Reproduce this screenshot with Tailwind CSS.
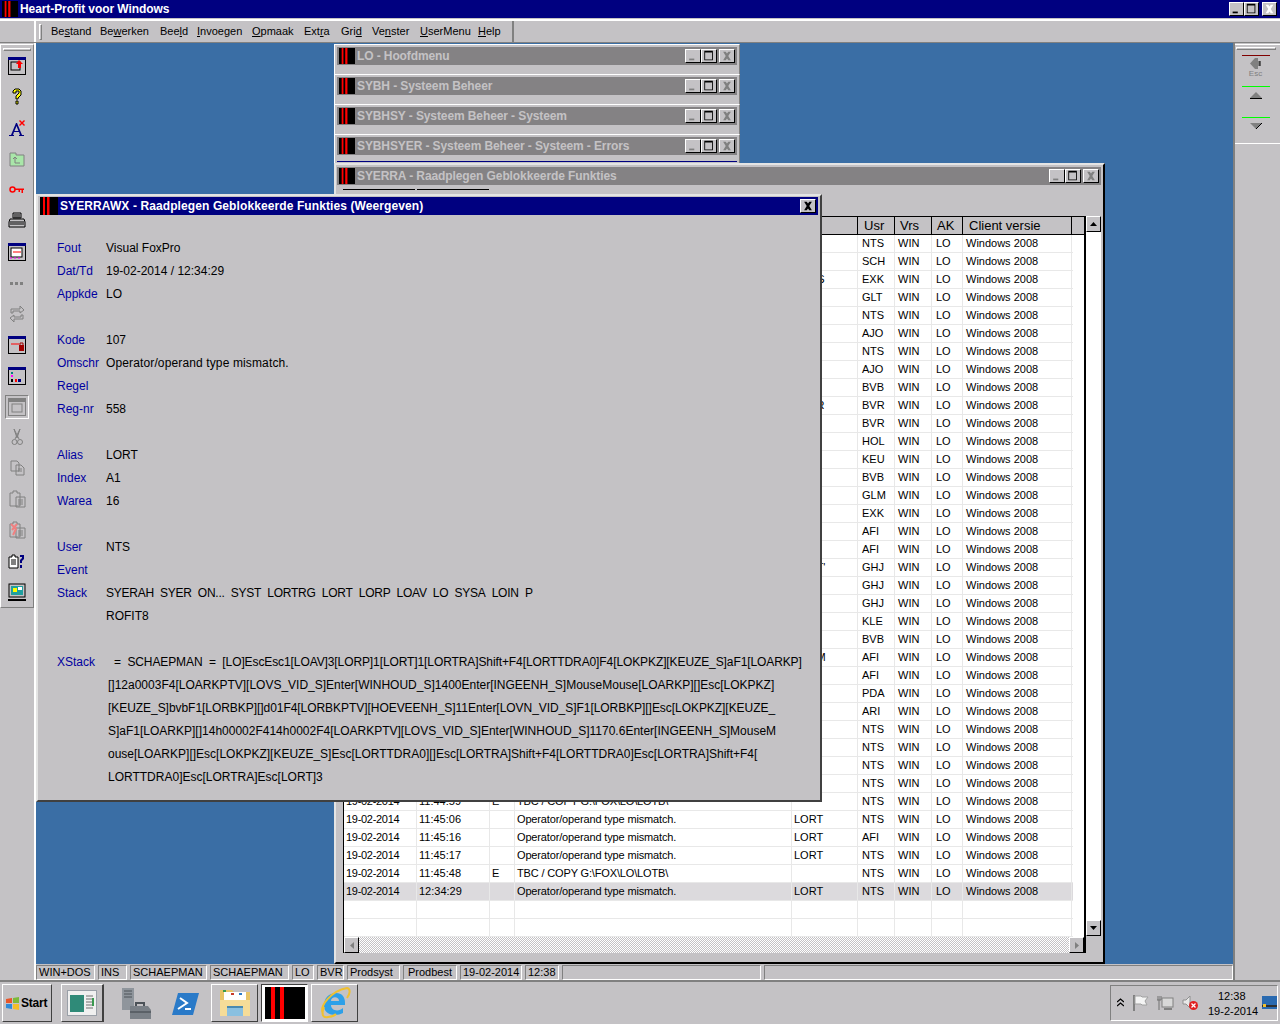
<!DOCTYPE html>
<html lang="nl">
<head>
    <meta charset="UTF-8">
    <title>Heart-Profit voor Windows</title>
    <script src="https://cdn.jsdelivr.net/npm/@tailwindcss/browser@4"></script>
</head>
<body class="w-[1280px] h-[1024px] overflow-hidden flex flex-col bg-[#c4c2c5] text-black text-[12px] leading-none font-['Liberation_Sans',sans-serif]">
    <!-- shared symbols -->
    <svg class="hidden">
        <symbol id="logo" viewBox="0 0 18 18"><rect width="18" height="18" fill="#000"/><rect x="3" width="2" height="18" fill="#f00"/><rect x="7" width="2.5" height="18" fill="#f00"/></symbol>
        <symbol id="min" viewBox="0 0 15 14"><rect x="3" y="10" width="6" height="2" fill="currentColor"/></symbol>
        <symbol id="max" viewBox="0 0 15 14"><path d="M2 1h10v11H2z M3 3v8h8V3z" fill="currentColor" fill-rule="evenodd"/></symbol>
        <symbol id="close" viewBox="0 0 15 14"><path d="M3 2l3 0 1.500 2 1.500-2 3 0-3 5 3 5-3 0-1.500-2-1.500 2-3 0 3-5z" fill="currentColor"/></symbol>
    </svg>

    <!-- hoofd titelbalk -->
    <header class="h-[18px] shrink-0 bg-[#000080] flex items-center text-white font-bold text-[12px] tracking-[-0.08px]">
        <svg class="w-[16px] h-[18px] ml-[2px] mr-[2px]"><use href="#logo"/></svg>
        <span>Heart-Profit voor Windows</span>
        <div class="ml-auto mr-[3px] flex">
            <button class="w-[15px] h-[14px] bg-[#c4c2c5] border-t border-l border-white border-r border-b border-r-black border-b-black text-black"><svg class="w-full h-full"><use href="#min"/></svg></button>
            <button class="w-[15px] h-[14px] bg-[#c4c2c5] border-t border-l border-white border-r border-b border-r-black border-b-black text-black"><svg class="w-full h-full"><use href="#max"/></svg></button>
            <button class="ml-[3px] w-[15px] h-[14px] bg-[#c4c2c5] border-t border-l border-white border-r border-b border-r-black border-b-black text-white"><svg class="w-full h-full"><use href="#close"/></svg></button>
        </div>
    </header>

    <!-- menubalk -->
    <nav class="h-[24px] shrink-0 flex border-t-2 border-t-white border-b border-b-[#808080] mt-[1px] text-[11px]">
        <div class="w-[36px] border-r-2 border-r-white"></div>
        <div class="w-[478px] flex items-center border-r-2 border-r-[#808080] relative">
            <div class="w-[3px] h-[16px] ml-[3px] border-l border-t border-white border-r border-b border-r-[#808080] border-b-[#808080]"></div>
            <a class="absolute left-[15px]">Be<u>s</u>tand</a>
            <a class="absolute left-[64px]">Be<u>w</u>erken</a>
            <a class="absolute left-[124px]">Bee<u>l</u>d</a>
            <a class="absolute left-[161px]"><u>I</u>nvoegen</a>
            <a class="absolute left-[216px]"><u>O</u>pmaak</a>
            <a class="absolute left-[268px]">Ext<u>r</u>a</a>
            <a class="absolute left-[305px]">Gri<u>d</u></a>
            <a class="absolute left-[336px]">Ve<u>n</u>ster</a>
            <a class="absolute left-[384px]"><u>U</u>serMenu</a>
            <a class="absolute left-[442px]"><u>H</u>elp</a>
        </div>
    </nav>

    <main class="flex-1 flex min-h-0">
        <!-- linker knoppenbalk -->
        <aside class="w-[36px] shrink-0 border-r-2 border-r-white">
            <div class="h-[564px] border-t border-l border-white border-r border-b border-r-[#808080] border-b-[#808080] mt-[1px] flex flex-col items-center relative">
                <div class="w-[28px] h-[3px] mt-[3px] border-t border-l border-white border-r border-b border-r-[#808080] border-b-[#808080]"></div>
                <div class="absolute left-[7px] top-[12px] flex flex-col gap-[13px]">
                    <svg class="w-[18px] h-[18px]" viewBox="0 0 18 18"><rect x=".5" y=".5" width="17" height="17" fill="#c4c2c5" stroke="#000"/><rect width="18" height="3" fill="#000080"/><rect x="3" y="5" width="9" height="8" fill="none" stroke="#000"/><path d="M11 3l4 4h-2v4h-3V7H8z" fill="#f00"/></svg>
                    <svg class="w-[18px] h-[18px]" viewBox="0 0 18 18"><path d="M5 5V3l2-2h4l2 2v4l-3 3v1H8V8l3-3V3H8v2zM8 13h2v3H8z" fill="#ff0" stroke="#000"/></svg>
                    <svg class="w-[18px] h-[18px]" viewBox="0 0 18 18"><path d="M1 17h5v-1H5l1-3h5l1 3h-1v1h5v-1h-2L9 4H8L3 16H1zM6.500 12L8.500 7l2 5z" fill="#000080"/><path d="M12 1l2 2 2-2 1 1-2 2 2 2-1 1-2-2-2 2-1-1 2-2-2-2z" fill="#f00"/></svg>
                    <svg class="w-[18px] h-[18px]" viewBox="0 0 18 18"><path d="M2 5V3h6v2h8v11H2z" fill="#a9e6a9" stroke="#808080"/><path d="M7 7v6h5M5 9l2-2 2 2" fill="none" stroke="#808080"/></svg>
                    <svg class="w-[18px] h-[18px]" viewBox="0 0 18 18"><circle cx="4.500" cy="8.500" r="2.500" fill="none" stroke="#f00" stroke-width="1.500"/><path d="M7 7.500h9V9h-1v3h-1.500V9H12v2h-1.500V9H7z" fill="#f00"/></svg>
                    <svg class="w-[18px] h-[18px]" viewBox="0 0 18 18"><path d="M5 1h8v5H5zM2 7h14l1 3v5H1v-5z" fill="#c4c2c5" stroke="#000"/><path d="M2 10h14M2 12h14M6 3h6M6 5h6" stroke="#000"/></svg>
                    <svg class="w-[18px] h-[18px]" viewBox="0 0 18 18"><rect x=".5" y=".5" width="17" height="17" fill="#c4c2c5" stroke="#000"/><rect width="18" height="3" fill="#000080"/><rect x="3" y="5" width="11" height="9" fill="#fff" stroke="#000"/><path d="M5 9h8" stroke="#f00"/><path d="M2 15h2M6 15h2M10 15h2" stroke="#f0f"/></svg>
                    <svg class="w-[18px] h-[18px]" viewBox="0 0 18 18"><path d="M2 8h3v3H2zM7 8h3v3H7zM12 8h3v3h-3z" fill="#808080"/></svg>
                    <svg class="w-[18px] h-[18px]" viewBox="0 0 18 18"><path d="M3 8V4h9V1l4 4-4 3V6H5v2zM15 10v4H6v3l-4-4 4-3v2h7v-2z" fill="none" stroke="#808080"/></svg>
                    <svg class="w-[18px] h-[18px]" viewBox="0 0 18 18"><rect x=".5" y=".5" width="17" height="17" fill="#c4c2c5" stroke="#000"/><rect width="18" height="3" fill="#000080"/><path d="M3 8h8" stroke="#f00"/><rect x="11" y="9" width="5" height="6" fill="#a00000"/><path d="M12 9V7h3v2" fill="none" stroke="#a00000"/></svg>
                    <svg class="w-[18px] h-[18px]" viewBox="0 0 18 18"><rect x=".5" y=".5" width="17" height="17" fill="#c4c2c5" stroke="#000"/><rect width="18" height="3" fill="#000080"/><rect x="3" y="5" width="2" height="2" fill="#008080"/><rect x="3" y="8" width="2" height="2" fill="#f0f"/><rect x="3" y="12" width="2" height="3" fill="#000"/><rect x="7" y="12" width="2" height="3" fill="#f00"/><rect x="10" y="12" width="3" height="3" fill="#000080"/></svg>
                </div>
                <!-- ingedrukte knop -->
                <div class="absolute left-[4px] top-[350px] w-[24px] h-[24px] border-t border-l border-t-[#808080] border-l-[#808080] border-r border-b border-white flex items-center justify-center">
                    <svg class="w-[18px] h-[18px]" viewBox="0 0 18 18"><rect x=".5" y=".5" width="17" height="17" fill="none" stroke="#808080"/><rect x="1" y="1" width="16" height="3" fill="#808080"/><rect x="4" y="6" width="10" height="8" fill="none" stroke="#808080"/></svg>
                </div>
                <div class="absolute left-[7px] top-[383px] flex flex-col gap-[13px]">
                    <svg class="w-[18px] h-[18px]" viewBox="0 0 18 18"><path d="M6 1l3 9 3-9M12 1L7 11M6 1l5 10" fill="none" stroke="#808080"/><circle cx="6.500" cy="14" r="2.500" fill="none" stroke="#808080"/><circle cx="12" cy="14" r="2.500" fill="none" stroke="#808080"/></svg>
                    <svg class="w-[18px] h-[18px]" viewBox="0 0 18 18"><path d="M3 2h6l2 2v8H3z M8 6h5l3 3v7H8z" fill="#c4c2c5" stroke="#808080"/><path d="M10 10h4M10 12h4" stroke="#808080"/></svg>
                    <svg class="w-[18px] h-[18px]" viewBox="0 0 18 18"><path d="M2 3h3V1h4v2h3v13H2z M8 7h9v10H8z" fill="#c4c2c5" stroke="#808080"/><path d="M10 10h5M10 12h5M10 14h5" stroke="#808080"/></svg>
                    <svg class="w-[18px] h-[18px]" viewBox="0 0 18 18"><path d="M2 3h3V1h4v2h3v13H2z M8 7h9v10H8z" fill="#c4c2c5" stroke="#808080"/><path d="M10 10h5M10 12h5M10 14h5" stroke="#808080"/><path d="M3 3l5 5-3 6M9 3L4 9" fill="none" stroke="#f08080" stroke-width="2"/></svg>
                    <svg class="w-[18px] h-[18px]" viewBox="0 0 18 18"><path d="M1 5h3V3h3v2h3v11H1z" fill="#fff" stroke="#000"/><path d="M3 8h5M3 10h5M3 12h5" stroke="#000"/><path d="M12 3h4v4l-2 2v2h-2V8l2-2V5h-2zM12 13h2v3h-2z" fill="#000080"/></svg>
                    <svg class="w-[18px] h-[18px]" viewBox="0 0 18 18"><rect x="1" y="1" width="16" height="13" fill="#c4c2c5" stroke="#000"/><rect x="3" y="3" width="12" height="9" fill="#20a0a0"/><rect x="5" y="5" width="4" height="4" fill="#ff0"/><rect x="10" y="4" width="4" height="3" fill="#fff"/><rect x="0" y="16" width="18" height="2" fill="#000"/></svg>
                </div>
            </div>
        </aside>

        <!-- midden: bureaublad en statusbalk -->
        <div class="flex-1 flex flex-col min-w-0">
            <section id="desktop" class="flex-1 bg-[#3a6ea5] relative">
                <div class="absolute left-[298px] top-[1px] w-[406px] h-[30px] bg-[#c4c2c5] border-t border-l border-white border-r border-r-[#808080] pt-[2px] pl-[2px] pr-[2px]">
                    <div class="h-[18px] bg-[#848284] flex items-center text-[#c4c2c5] font-bold tracking-[-0.1px]">
                        <svg class="w-[16px] h-[18px] ml-[2px] mr-[2px]"><use href="#logo"/></svg><span>LO - Hoofdmenu</span>
                        <div class="ml-auto mr-[2px] flex">
                            <button class="w-[16px] h-[14px] bg-[#c4c2c5] border-t border-l border-white border-r border-b border-r-black border-b-black text-[#808080]"><svg class="w-full h-full"><use href="#min"/></svg></button>
                            <button class="w-[16px] h-[14px] bg-[#c4c2c5] border-t border-l border-white border-r border-b border-r-black border-b-black text-black"><svg class="w-full h-full"><use href="#max"/></svg></button>
                            <button class="ml-[2px] w-[16px] h-[14px] bg-[#c4c2c5] border-t border-l border-white border-r border-b border-r-black border-b-black text-[#808080]"><svg class="w-full h-full"><use href="#close"/></svg></button>
                        </div>
                    </div>
                </div>
                <div class="absolute left-[298px] top-[31px] w-[406px] h-[30px] bg-[#c4c2c5] border-t border-l border-white border-r border-r-[#808080] pt-[2px] pl-[2px] pr-[2px]">
                    <div class="h-[18px] bg-[#848284] flex items-center text-[#c4c2c5] font-bold tracking-[-0.1px]">
                        <svg class="w-[16px] h-[18px] ml-[2px] mr-[2px]"><use href="#logo"/></svg><span>SYBH - Systeem Beheer</span>
                        <div class="ml-auto mr-[2px] flex">
                            <button class="w-[16px] h-[14px] bg-[#c4c2c5] border-t border-l border-white border-r border-b border-r-black border-b-black text-[#808080]"><svg class="w-full h-full"><use href="#min"/></svg></button>
                            <button class="w-[16px] h-[14px] bg-[#c4c2c5] border-t border-l border-white border-r border-b border-r-black border-b-black text-black"><svg class="w-full h-full"><use href="#max"/></svg></button>
                            <button class="ml-[2px] w-[16px] h-[14px] bg-[#c4c2c5] border-t border-l border-white border-r border-b border-r-black border-b-black text-[#808080]"><svg class="w-full h-full"><use href="#close"/></svg></button>
                        </div>
                    </div>
                </div>
                <div class="absolute left-[298px] top-[61px] w-[406px] h-[30px] bg-[#c4c2c5] border-t border-l border-white border-r border-r-[#808080] pt-[2px] pl-[2px] pr-[2px]">
                    <div class="h-[18px] bg-[#848284] flex items-center text-[#c4c2c5] font-bold tracking-[-0.1px]">
                        <svg class="w-[16px] h-[18px] ml-[2px] mr-[2px]"><use href="#logo"/></svg><span>SYBHSY - Systeem Beheer - Systeem</span>
                        <div class="ml-auto mr-[2px] flex">
                            <button class="w-[16px] h-[14px] bg-[#c4c2c5] border-t border-l border-white border-r border-b border-r-black border-b-black text-[#808080]"><svg class="w-full h-full"><use href="#min"/></svg></button>
                            <button class="w-[16px] h-[14px] bg-[#c4c2c5] border-t border-l border-white border-r border-b border-r-black border-b-black text-black"><svg class="w-full h-full"><use href="#max"/></svg></button>
                            <button class="ml-[2px] w-[16px] h-[14px] bg-[#c4c2c5] border-t border-l border-white border-r border-b border-r-black border-b-black text-[#808080]"><svg class="w-full h-full"><use href="#close"/></svg></button>
                        </div>
                    </div>
                </div>
                <div class="absolute left-[298px] top-[91px] w-[406px] h-[30px] bg-[#c4c2c5] border-t border-l border-white border-r border-r-[#808080] pt-[2px] pl-[2px] pr-[2px]">
                    <div class="h-[18px] bg-[#848284] flex items-center text-[#c4c2c5] font-bold tracking-[-0.1px]">
                        <svg class="w-[16px] h-[18px] ml-[2px] mr-[2px]"><use href="#logo"/></svg><span>SYBHSYER - Systeem Beheer - Systeem - Errors</span>
                        <div class="ml-auto mr-[2px] flex">
                            <button class="w-[16px] h-[14px] bg-[#c4c2c5] border-t border-l border-white border-r border-b border-r-black border-b-black text-[#808080]"><svg class="w-full h-full"><use href="#min"/></svg></button>
                            <button class="w-[16px] h-[14px] bg-[#c4c2c5] border-t border-l border-white border-r border-b border-r-black border-b-black text-black"><svg class="w-full h-full"><use href="#max"/></svg></button>
                            <button class="ml-[2px] w-[16px] h-[14px] bg-[#c4c2c5] border-t border-l border-white border-r border-b border-r-black border-b-black text-[#808080]"><svg class="w-full h-full"><use href="#close"/></svg></button>
                        </div>
                    </div>
                    <div class="h-[1px] mt-[6px] bg-[#000080]"></div>
                </div>

                <!-- SYERRA venster met grid -->
                <div class="absolute left-[298px] top-[120px] w-[771px] h-[801px] bg-[#c4c2c5] border-t-2 border-l-2 border-t-[#e4e4e4] border-l-[#e4e4e4] border-r-2 border-b-2 border-r-black border-b-black pt-[2px] pl-[1px] pr-[2px] flex flex-col">
                    <div class="h-[18px] shrink-0 bg-[#848284] flex items-center text-[#c4c2c5] font-bold tracking-[-0.1px]">
                        <svg class="w-[16px] h-[18px] ml-[2px] mr-[2px]"><use href="#logo"/></svg><span>SYERRA - Raadplegen Geblokkeerde Funkties</span>
                        <div class="ml-auto mr-[2px] flex">
                            <button class="w-[16px] h-[14px] bg-[#c4c2c5] border-t border-l border-white border-r border-b border-r-black border-b-black text-[#808080]"><svg class="w-full h-full"><use href="#min"/></svg></button>
                            <button class="w-[16px] h-[14px] bg-[#c4c2c5] border-t border-l border-white border-r border-b border-r-black border-b-black text-black"><svg class="w-full h-full"><use href="#max"/></svg></button>
                            <button class="ml-[2px] w-[16px] h-[14px] bg-[#c4c2c5] border-t border-l border-white border-r border-b border-r-black border-b-black text-[#808080]"><svg class="w-full h-full"><use href="#close"/></svg></button>
                        </div>
                    </div>
                    <div class="flex ml-[6px] gap-[2px] mt-[4px] h-[27px] shrink-0">
                        <div class="w-[72px] border-t border-t-black"></div>
                        <div class="w-[72px] border-t border-t-black"></div>
                    </div>
                    <div class="flex ml-[6px] h-[737px]">
                        <div class="w-[743px] flex flex-col border-t border-l border-r-2 border-black border-r-black">
                            <div class="h-[18px] flex shrink-0 bg-[#c4c2c5] border-b border-b-black text-[13px] items-stretch">
                                <div class="w-[514px] border-r border-r-black"></div>
                                <div class="w-[37px] border-r border-r-black pl-[6px] flex items-center">Usr</div>
                                <div class="w-[37px] border-r border-r-black pl-[5px] flex items-center">Vrs</div>
                                <div class="w-[31px] border-r border-r-black pl-[5px] flex items-center">AK</div>
                                <div class="w-[109px] border-r border-r-black pl-[6px] flex items-center">Client versie</div>
                            </div>
                            <div id="rows" class="flex-1 bg-white overflow-hidden text-[11px]"></div>
                            <!-- horizontale scrollbalk -->
                            <div class="h-[16px] shrink-0 flex justify-between bg-[repeating-conic-gradient(#ffffff_0_25%,#c4c2c5_0_50%)] bg-[length:2px_2px]">
                                <div class="w-[15px] h-[16px] bg-[#c4c2c5] border-t border-l border-white border-r border-b border-r-black border-b-black flex items-center justify-center"><svg class="w-[4px] h-[7px]" viewBox="0 0 4 7"><path d="M4 0v7L0 3.500z" fill="#808080"/></svg></div>
                                <div class="w-[15px] h-[16px] bg-[#c4c2c5] border-t border-l border-white border-r border-b border-r-black border-b-black flex items-center justify-center"><svg class="w-[4px] h-[7px]" viewBox="0 0 4 7"><path d="M0 0v7l4-3.500z" fill="#808080"/></svg></div>
                            </div>
                        </div>
                        <!-- verticale scrollbalk -->
                        <div class="w-[15px] h-[720px] flex flex-col justify-between bg-white">
                            <div class="h-[16px] bg-[#c4c2c5] border-t border-l border-white border-r border-b border-r-black border-b-black flex items-center justify-center"><svg class="w-[7px] h-[4px]" viewBox="0 0 7 4"><path d="M0 4h7L3.500 0z"/></svg></div>
                            <div class="h-[16px] bg-[#c4c2c5] border-t border-l border-white border-r border-b border-r-black border-b-black flex items-center justify-center"><svg class="w-[7px] h-[4px]" viewBox="0 0 7 4"><path d="M0 0h7L3.500 4z"/></svg></div>
                        </div>
                    </div>
                </div>

                <!-- actief dialoogvenster -->
                <div class="absolute left-0 top-[151px] w-[786px] h-[608px] bg-[#c4c2c5] border-t-2 border-l-2 border-t-[#e4e4e4] border-l-[#e4e4e4] border-r-2 border-b-2 border-r-[#404040] border-b-[#404040] pt-[1px] pl-[2px] pr-[2px]">
                    <div class="h-[18px] bg-[#000080] flex items-center text-white font-bold tracking-[0.1px]">
                        <svg class="w-[18px] h-[18px] mr-[2px]"><use href="#logo"/></svg><span>SYERRAWX - Raadplegen Geblokkeerde Funkties (Weergeven)</span>
                        <button class="ml-auto mr-[2px] w-[16px] h-[14px] bg-[#c4c2c5] border-t border-l border-white border-r border-b border-r-black border-b-black text-black"><svg class="w-full h-full"><use href="#close"/></svg></button>
                    </div>
                    <div class="pl-[17px] pt-[21px] grid grid-cols-[49px_1fr] auto-rows-[23px] items-center whitespace-nowrap">
                        <span class="text-[#0000a0]">Fout</span><span>Visual FoxPro</span>
                        <span class="text-[#0000a0]">Dat/Td</span><span>19-02-2014 / 12:34:29</span>
                        <span class="text-[#0000a0]">Appkde</span><span>LO</span>
                        <span class="col-span-2"></span>
                        <span class="text-[#0000a0]">Kode</span><span>107</span>
                        <span class="text-[#0000a0] w-[44px] overflow-hidden">Omschr</span><span class="tracking-[0.13px]">Operator/operand type mismatch.</span>
                        <span class="text-[#0000a0]">Regel</span><span></span>
                        <span class="text-[#0000a0]">Reg-nr</span><span>558</span>
                        <span class="col-span-2"></span>
                        <span class="text-[#0000a0]">Alias</span><span>LORT</span>
                        <span class="text-[#0000a0]">Index</span><span>A1</span>
                        <span class="text-[#0000a0]">Warea</span><span>16</span>
                        <span class="col-span-2"></span>
                        <span class="text-[#0000a0]">User</span><span>NTS</span>
                        <span class="text-[#0000a0]">Event</span><span></span>
                        <span class="text-[#0000a0]">Stack</span><span class="tracking-[-0.25px]">SYERAH&nbsp; SYER&nbsp; ON...&nbsp; SYST&nbsp; LORTRG&nbsp; LORT&nbsp; LORP&nbsp; LOAV&nbsp; LO&nbsp; SYSA&nbsp; LOIN&nbsp; P</span>
                        <span></span><span>ROFIT8</span>
                        <span class="col-span-2"></span>
                        <span class="text-[#0000a0]">XStack</span><span class="pl-[8px] tracking-[-0.1px]">=&nbsp; SCHAEPMAN&nbsp; =&nbsp; [LO]EscEsc1[LOAV]3[LORP]1[LORT]1[LORTRA]Shift+F4[LORTTDRA0]F4[LOKPKZ][KEUZE_S]aF1[LOARKP]</span>
                        <span></span><span class="pl-[2px]">[]12a0003F4[LOARKPTV][LOVS_VID_S]Enter[WINHOUD_S]1400Enter[INGEENH_S]MouseMouse[LOARKP][]Esc[LOKPKZ]</span>
                        <span></span><span class="pl-[2px] tracking-[-0.05px]">[KEUZE_S]bvbF1[LORBKP][]d01F4[LORBKPTV][HOEVEENH_S]11Enter[LOVN_VID_S]F1[LORBKP][]Esc[LOKPKZ][KEUZE_</span>
                        <span></span><span class="pl-[2px]">S]aF1[LOARKP][]14h00002F414h0002F4[LOARKPTV][LOVS_VID_S]Enter[WINHOUD_S]1170.6Enter[INGEENH_S]MouseM</span>
                        <span></span><span class="pl-[2px]">ouse[LOARKP][]Esc[LOKPKZ][KEUZE_S]Esc[LORTTDRA0][]Esc[LORTRA]Shift+F4[LORTTDRA0]Esc[LORTRA]Shift+F4[</span>
                        <span></span><span class="pl-[2px]">LORTTDRA0]Esc[LORTRA]Esc[LORT]3</span>
                    </div>
                </div>
            </section>

            <!-- statusbalk -->
            <footer class="h-[16px] shrink-0 flex gap-[3px] pt-[1px] text-[11px] whitespace-nowrap">
                <div class="w-[59px] border-t border-l border-t-[#808080] border-l-[#808080] border-r border-b border-white flex items-center pl-[2px]">WIN+DOS</div>
                <div class="w-[29px] border-t border-l border-t-[#808080] border-l-[#808080] border-r border-b border-white flex items-center pl-[2px]">INS</div>
                <div class="w-[77px] border-t border-l border-t-[#808080] border-l-[#808080] border-r border-b border-white flex items-center pl-[2px]">SCHAEPMAN</div>
                <div class="w-[79px] border-t border-l border-t-[#808080] border-l-[#808080] border-r border-b border-white flex items-center pl-[2px]">SCHAEPMAN</div>
                <div class="w-[22px] border-t border-l border-t-[#808080] border-l-[#808080] border-r border-b border-white flex items-center pl-[2px]">LO</div>
                <div class="w-[27px] border-t border-l border-t-[#808080] border-l-[#808080] border-r border-b border-white flex items-center pl-[2px]">BVR</div>
                <div class="w-[53px] border-t border-l border-t-[#808080] border-l-[#808080] border-r border-b border-white flex items-center pl-[2px]">Prodsyst</div>
                <div class="w-[54px] border-t border-l border-t-[#808080] border-l-[#808080] border-r border-b border-white flex items-center justify-center">Prodbest</div>
                <div class="w-[62px] border-t border-l border-t-[#808080] border-l-[#808080] border-r border-b border-white flex items-center pl-[2px]">19-02-2014</div>
                <div class="w-[34px] border-t border-l border-t-[#808080] border-l-[#808080] border-r border-b border-white flex items-center pl-[2px]">12:38</div>
                <div class="w-[199px] border-t border-l border-t-[#808080] border-l-[#808080] border-r border-b border-white"></div>
                <div class="flex-1 border-t border-l border-t-[#808080] border-l-[#808080] border-r border-b border-white"></div>
            </footer>
        </div>

        <!-- rechter knoppenbalk -->
        <aside class="w-[47px] shrink-0 border-l-2 border-l-[#808080]">
            <div class="h-[100px] mt-[1px] border-t border-white border-b border-b-white flex flex-col items-center pr-[4px]">
                <div class="w-[40px] h-[3px] mt-[2px] border-t border-l border-white border-r border-b border-r-[#808080] border-b-[#808080]"></div>
                <div class="w-[28px] h-[1px] mt-[5px] bg-[#800000]"></div>
                <svg class="w-[12px] h-[11px] mt-[2px]" viewBox="0 0 12 11"><path d="M0 5.500L5 0h3v3h2v5H8v3H5z" fill="#808080"/><path d="M10 3v5" stroke="#000"/></svg>
                <span class="text-[8px] text-[#808080] mt-[1px] h-[9px]">Esc</span>
                <div class="w-[28px] h-[1px] mt-[7px] bg-[#00ff00]"></div>
                <svg class="w-[12px] h-[7px] mt-[5px]" viewBox="0 0 12 7"><path d="M0 6L6 0l6 6z" fill="#808080"/><path d="M0 6.500h12" stroke="#000"/></svg>
                <div class="w-[28px] h-[1px] mt-[18px] bg-[#00ff00]"></div>
                <svg class="w-[12px] h-[7px] mt-[5px]" viewBox="0 0 12 7"><path d="M0 0h12L6 6z" fill="#808080"/><path d="M6 6l6-6" stroke="#000"/></svg>
            </div>
        </aside>
    </main>

    <!-- Windows taakbalk -->
    <div class="h-[44px] shrink-0 border-t-2 border-t-[#808080] flex items-center relative">
        <button class="absolute left-[2px] top-[2px] w-[50px] h-[38px] border border-white border-r-[#404040] border-b-[#404040] flex items-center font-bold text-[12px] pl-[2px] gap-[1px] tracking-[-0.2px]">
            <svg class="w-[15px] h-[15px]" viewBox="0 0 15 15"><path d="M1 3l6-1v5H1z" fill="#e8562a"/><path d="M8 2l6-1v6H8z" fill="#7cba3a"/><path d="M1 8h6v5l-6-1z" fill="#2f8ad8"/><path d="M8 8h6v6l-6-1z" fill="#f5bd27"/></svg>Start
        </button>
        <button class="absolute left-[61px] top-[2px] w-[43px] h-[38px] border border-white border-r-2 border-r-[#404040] border-b-[#404040] flex items-center justify-center">
            <svg class="w-[30px] h-[26px]" viewBox="0 0 30 26"><rect x=".5" y=".5" width="29" height="25" fill="#f0f0f0" stroke="#9aa0a8"/><rect x="3" y="5" width="14" height="17" fill="#2f8a78"/><path d="M19 6h7M19 9h7M19 12h7M19 15h7M19 18h7" stroke="#707070"/><rect x="25" y="8" width="2" height="8" fill="#3a9a50"/></svg>
        </button>
        <svg class="absolute left-[120px] top-[6px] w-[32px] h-[32px]" viewBox="0 0 32 32"><path d="M2 0h12v22H2z" fill="#8f959c"/><path d="M4 3h8M4 6h8M4 9h8" stroke="#4c5258"/><path d="M10 18h18l3 4v9H10z" fill="#7a8087"/><path d="M16 18v-3h8v3" fill="none" stroke="#4c5258" stroke-width="2"/><path d="M10 24h21" stroke="#3c4248"/></svg>
        <svg class="absolute left-[172px] top-[8px] w-[27px] h-[27px]" viewBox="0 0 27 27"><path d="M6 3h21l-6 22H0z" fill="#2a7ac8"/><path d="M8 8l7 5-9 6M13 19h6" fill="none" stroke="#fff" stroke-width="2"/></svg>
        <button class="absolute left-[211px] top-[2px] w-[47px] h-[38px] border border-white border-r-[#404040] border-b-[#404040] flex items-center justify-center">
            <svg class="w-[32px] h-[32px]" viewBox="0 0 32 32"><path d="M1 3h12l2 2h16v24H1z" fill="#e8c468"/><rect x="5" y="5" width="22" height="8" fill="#fff"/><rect x="4" y="3" width="3" height="2" fill="#3a9a50"/><rect x="12" y="6" width="3" height="2" fill="#c83a2a"/><rect x="20" y="6" width="3" height="2" fill="#2a7ac8"/><path d="M1 13h30v16H1z" fill="#f5dc98"/><path d="M8 29V20h16v9" fill="#8ac0e0"/><path d="M8 20h16" stroke="#4a8ab0" stroke-width="2"/></svg>
        </button>
        <button class="absolute left-[261px] top-[2px] w-[47px] h-[38px] border border-[#404040] border-r-white border-b-white bg-white flex items-center justify-center">
            <svg class="w-[40px] h-[32px]" viewBox="0 0 40 32" preserveAspectRatio="none"><rect width="40" height="32" fill="#000"/><rect x="6" width="4" height="32" fill="#f00"/><rect x="15" width="4" height="32" fill="#f00"/></svg>
        </button>
        <button class="absolute left-[311px] top-[2px] w-[47px] h-[38px] border border-white border-r-[#404040] border-b-[#404040] flex items-center justify-center">
            <svg class="w-[32px] h-[32px]" viewBox="0 0 32 32"><path d="M5 19c0-8 5-13 12-13 6 0 9 4 9 10v2H12c0 6 8 7 12 3v5c-7 4-19 2-19-7zM12 14h8c0-5-8-5-8 0z" fill="#2da0e8"/><path d="M4 27C0 19 12 4 28 1c4 1 3 6 0 10M5 20C2 28 4 31 9 30c3 0 6-1 8-3" fill="none" stroke="#f0c030" stroke-width="2"/></svg>
        </button>
        <!-- systeemvak -->
        <div class="absolute left-[1110px] top-[3px] w-[168px] h-[36px] border-t border-l border-t-[#808080] border-l-[#808080] border-r border-b border-white text-[11px]">
            <svg class="absolute left-[6px] top-[12px] w-[7px] h-[9px]" viewBox="0 0 7 9"><path d="M0 4l3.500-3L7 4M0 8l3.500-3L7 8" fill="none" stroke="#000" stroke-width="1.300"/></svg>
            <svg class="absolute left-[22px] top-[9px] w-[16px] h-[16px]" viewBox="0 0 16 16"><path d="M1 0v16" stroke="#808080" stroke-width="2"/><path d="M2 1h6l1 1h6l-3 4 2 4H9l-1-1H2z" fill="#f4f4f4" stroke="#a0a0a0"/></svg>
            <svg class="absolute left-[46px] top-[9px] w-[17px] h-[16px]" viewBox="0 0 17 16"><rect x="5" y="3" width="11" height="9" fill="#d8d8d8" stroke="#808080"/><path d="M2 1v14M0 1v4h4V1" fill="none" stroke="#707070"/><path d="M7 14h8" stroke="#808080" stroke-width="2"/></svg>
            <svg class="absolute left-[71px] top-[9px] w-[17px] h-[17px]" viewBox="0 0 17 17"><path d="M1 5h3l4-4v12L4 9H1z" fill="#e8e8e8" stroke="#909090"/><circle cx="11.500" cy="10.500" r="4.500" fill="#e02020"/><path d="M9.500 8.500l4 4M13.500 8.500l-4 4" stroke="#fff" stroke-width="1.300"/></svg>
            <span class="absolute left-[107px] top-[5px]">12:38</span>
            <span class="absolute left-[97px] top-[20px]">19-2-2014</span>
            <svg class="absolute left-[151px] top-[10px] w-[15px] h-[13px]" viewBox="0 0 15 13"><rect width="15" height="13" fill="#2a6ab0"/><rect y="9" width="15" height="2" fill="#303030"/><rect x="1" y="8" width="3" height="3" fill="#f0c030"/></svg>
        </div>
    </div>

    <script>
        // zichtbare kolommen van het grid: [datum, tijd, E, omschrijving, alias, usr]
        var usrs = "NTS SCH EXK GLT NTS AJO NTS AJO BVB BVR BVR HOL KEU BVB GLM EXK AFI AFI GHJ GHJ GHJ KLE BVB AFI AFI PDA ARI NTS NTS NTS NTS".split(" ");
        var rows = usrs.map(function (u, i) {
            var alias = { 2: "LOOS", 9: "LORR", 18: "LORT'", 23: "LORM" }[i] || "";
            return ["", "", "", "", alias, u];
        });
        var mis = "Operator/operand type mismatch.";
        var tbc = "TBC / COPY G:\\FOX\\LO\\LOTB\\";
        rows.push(["19-02-2014", "11:44:59", "E", tbc, "", "NTS"]);
        rows.push(["19-02-2014", "11:45:06", "", mis, "LORT", "NTS"]);
        rows.push(["19-02-2014", "11:45:16", "", mis, "LORT", "AFI"]);
        rows.push(["19-02-2014", "11:45:17", "", mis, "LORT", "NTS"]);
        rows.push(["19-02-2014", "11:45:48", "E", tbc, "", "NTS"]);
        rows.push(["19-02-2014", "12:34:29", "", mis, "LORT", "NTS"]);
        rows.push(["", "", "", "", "", ""]);
        rows.push(["", "", "", "", "", ""]);

        var cell = "border-r border-r-[#e8e8e8] h-full flex items-center whitespace-nowrap overflow-hidden";
        document.getElementById("rows").innerHTML = rows.map(function (r, i) {
            var blank = i > 36;
            var rowCls = i === 36 ? "bg-[#dcdadd]" : "";
            return '<div class="h-[18px] flex border-b border-b-[#e8e8e8] w-[729px] ' + rowCls + '">' +
                '<div class="w-[73px] pl-[2px] tracking-[-0.3px] ' + cell + '">' + r[0] + '</div>' +
                '<div class="w-[73px] pl-[2px] ' + cell + '">' + r[1] + '</div>' +
                '<div class="w-[25px] pl-[2px] ' + cell + '">' + r[2] + '</div>' +
                '<div class="w-[277px] pl-[2px] tracking-[-0.15px] ' + cell + '">' + r[3] + '</div>' +
                '<div class="w-[66px] pl-[2px] ' + cell + '">' + r[4] + '</div>' +
                '<div class="w-[37px] pl-[4px] ' + cell + '">' + r[5] + '</div>' +
                '<div class="w-[37px] pl-[3px] ' + cell + '">' + (blank ? "" : "WIN") + '</div>' +
                '<div class="w-[31px] pl-[4px] ' + cell + '">' + (blank ? "" : "LO") + '</div>' +
                '<div class="w-[109px] pl-[3px] ' + cell + '">' + (blank ? "" : "Windows 2008") + '</div>' +
                '</div>';
        }).join("");
    </script>
</body>
</html>
